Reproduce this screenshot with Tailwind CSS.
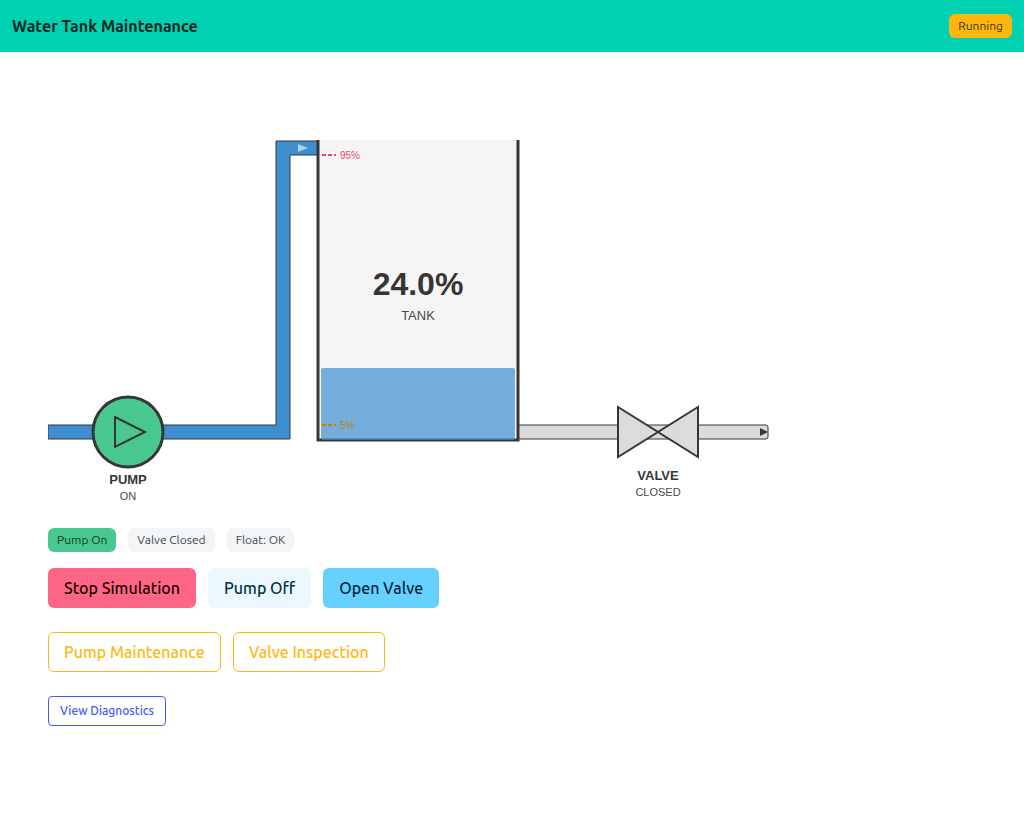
<!DOCTYPE html>
<html lang="en">
  <head>
    <meta charset="UTF-8" />
    <meta name="viewport" content="width=device-width, initial-scale=1.0" />
    <title>Water Tank Maintenance</title>
    <script src="https://cdn.jsdelivr.net/npm/@tailwindcss/browser@4"></script>
  </head>
  <body class="bg-white font-[Ubuntu,'Noto_Sans',sans-serif] text-[#404654]">
    <!-- Header -->
    <header class="flex h-13 items-center justify-between bg-[#00d1b2] px-3">
      <h1 class="text-base font-semibold text-[#00261f]">Water Tank Maintenance</h1>
      <span class="flex h-6 items-center rounded-md bg-[#ffb70f] px-[9px] text-xs text-[#423000]">Running</span>
    </header>

    <main class="p-12">
      <!-- Process diagram -->
      <svg
        class="block w-[800px] max-w-full font-['Liberation_Sans',Arial,sans-serif]"
        viewBox="0 0 800 412"
        role="img"
        aria-label="Pump, tank and valve"
      >
        <!-- inlet pipe -->
        <path d="M0 325H228V41H270V55H242V339H0Z" fill="#3e8ed0" stroke="#363636" />
        <polygon points="250,44 260,48 250,52" fill="#fff" opacity="0.6" />

        <!-- outlet pipe -->
        <rect x="470" y="325" width="250" height="14" rx="2" fill="#dbdbdb" stroke="#363636" />
        <polygon points="712,328 720,332 712,336" fill="#363636" />

        <!-- tank -->
        <rect x="270" y="40" width="200" height="300" fill="#f5f5f5" />
        <path d="M270 40V340H470V40" fill="none" stroke="#363636" stroke-width="3" />
        <rect x="273" y="268" width="194" height="72" rx="2" fill="#3e8ed0" opacity="0.7" />
        <g stroke-width="2" stroke-dasharray="4 2">
          <path d="M274 55H288" stroke="#f14668" />
          <path d="M274 325H288" stroke="#b8860b" />
        </g>
        <g font-size="10">
          <text x="292" y="59" fill="#f14668">95%</text>
          <text x="292" y="329" fill="#b8860b">5%</text>
        </g>
        <text x="370" y="195" text-anchor="middle" font-size="32" font-weight="700" fill="#363636">24.0%</text>
        <text x="370" y="220" text-anchor="middle" font-size="13" fill="#4a4a4a">TANK</text>

        <!-- pump -->
        <g stroke="#363636">
          <circle cx="80" cy="332" r="35" fill="#48c78e" stroke-width="3" />
          <polygon points="67,317 97,332 67,347" fill="none" stroke-width="2" />
        </g>
        <text x="80" y="384" text-anchor="middle" font-size="13" font-weight="700" fill="#363636">PUMP</text>
        <text x="80" y="400" text-anchor="middle" font-size="11" fill="#4a4a4a">ON</text>

        <!-- valve -->
        <g fill="#dbdbdb" stroke="#363636" stroke-width="2">
          <polygon points="570,307 610,332 570,357" />
          <polygon points="650,307 610,332 650,357" />
        </g>
        <text x="610" y="380" text-anchor="middle" font-size="13" font-weight="700" fill="#363636">VALVE</text>
        <text x="610" y="396" text-anchor="middle" font-size="11" fill="#4a4a4a">CLOSED</text>
      </svg>

      <!-- Status tags -->
      <div class="mt-4 flex flex-wrap gap-3 text-xs">
        <span class="flex h-6 items-center rounded-md bg-[#48c78e] px-[9px] text-[#0f3a26]">Pump On</span>
        <span class="flex h-6 items-center rounded-md bg-[#f3f4f6] px-[9px]">Valve Closed</span>
        <span class="flex h-6 items-center rounded-md bg-[#f3f4f6] px-[9px]">Float: OK</span>
      </div>

      <!-- Controls -->
      <div class="mt-4 flex flex-wrap gap-3">
        <button type="button" class="h-10 rounded-md bg-[#ff6685] px-4 font-medium text-[#1a0005]">Stop Simulation</button>
        <button type="button" class="h-10 rounded-md bg-[#ebf8ff] px-4 font-medium text-[#00334a]">Pump Off</button>
        <button type="button" class="h-10 rounded-md bg-[#66d1ff] px-4 font-medium text-[#002433]">Open Valve</button>
      </div>

      <div class="mt-6 flex flex-wrap gap-3">
        <button type="button" class="h-10 rounded-md border border-[#ffb70f] px-[15px] font-medium text-[#ffb70f]">Pump Maintenance</button>
        <button type="button" class="h-10 rounded-md border border-[#ffb70f] px-[15px] font-medium text-[#ffb70f]">Valve Inspection</button>
      </div>

      <div class="mt-6 flex">
        <button type="button" class="h-[30px] rounded-sm border border-[#4258ff] px-[11px] text-xs font-medium text-[#4258ff]">View Diagnostics</button>
      </div>
    </main>
  </body>
</html>
